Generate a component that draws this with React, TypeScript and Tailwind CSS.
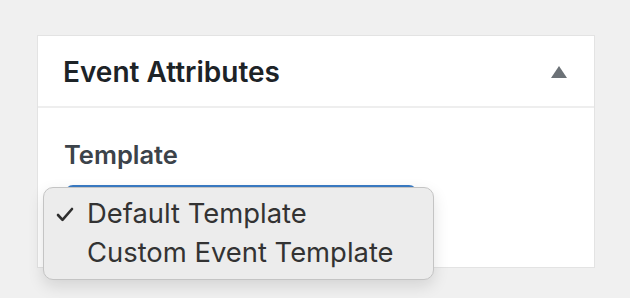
import React from "react";

export default function App() {
  return (
    <div
      className="w-[630px] h-[298px] bg-[#f0f0f0] overflow-hidden relative"
      style={{ fontFamily: "Inter, 'Noto Sans', sans-serif" }}
    >
      <div className="absolute left-[37px] top-[35px] w-[558px] h-[233px] bg-white border border-[#e3e3e3]">
        <div className="h-[72px] border-b-2 border-[#eeeeee] flex items-center justify-between pl-[25px] pr-[27px]">
          <h2 className="text-[28px] font-semibold text-[#1d2327] leading-none pt-[2px]">
            Event Attributes
          </h2>
          <svg width="16" height="12" viewBox="0 0 16 12" className="mt-[1px]">
            <polygon points="8,0 16,12 0,12" fill="#6c7277" />
          </svg>
        </div>
        <div className="pl-[26px] pt-[34px]">
          <div className="text-[25.5px] font-semibold text-[#3c434a] leading-none">Template</div>
          <div className="mt-[17px] ml-[1px] w-[352px] h-[60px] rounded-[8px] border-t-[3px] border-[#3a7bc4] bg-[#f7f7f7]" />
        </div>
      </div>
      <div className="absolute left-[43px] top-[187px] w-[391px] h-[93px] rounded-[10px] bg-[#ececec] border border-[#c4c4c4] shadow-[0_6px_16px_rgba(0,0,0,0.12)] pt-[6px]">
        <div className="flex items-center h-[39px] text-[27.4px] text-[#333333] leading-none">
          <svg width="18" height="15" viewBox="0 0 18 15" className="ml-[12px] mr-[13px] mt-[2px]">
            <path d="M2 8 L6.5 12.8 L16 2" fill="none" stroke="#2e2e2e" strokeWidth="2.6" strokeLinecap="round" strokeLinejoin="round" />
          </svg>
          <span>Default Template</span>
        </div>
        <div className="flex items-center h-[39px] text-[27.4px] text-[#333333] leading-none pl-[43px]">
          <span>Custom Event Template</span>
        </div>
      </div>
    </div>
  );
}
